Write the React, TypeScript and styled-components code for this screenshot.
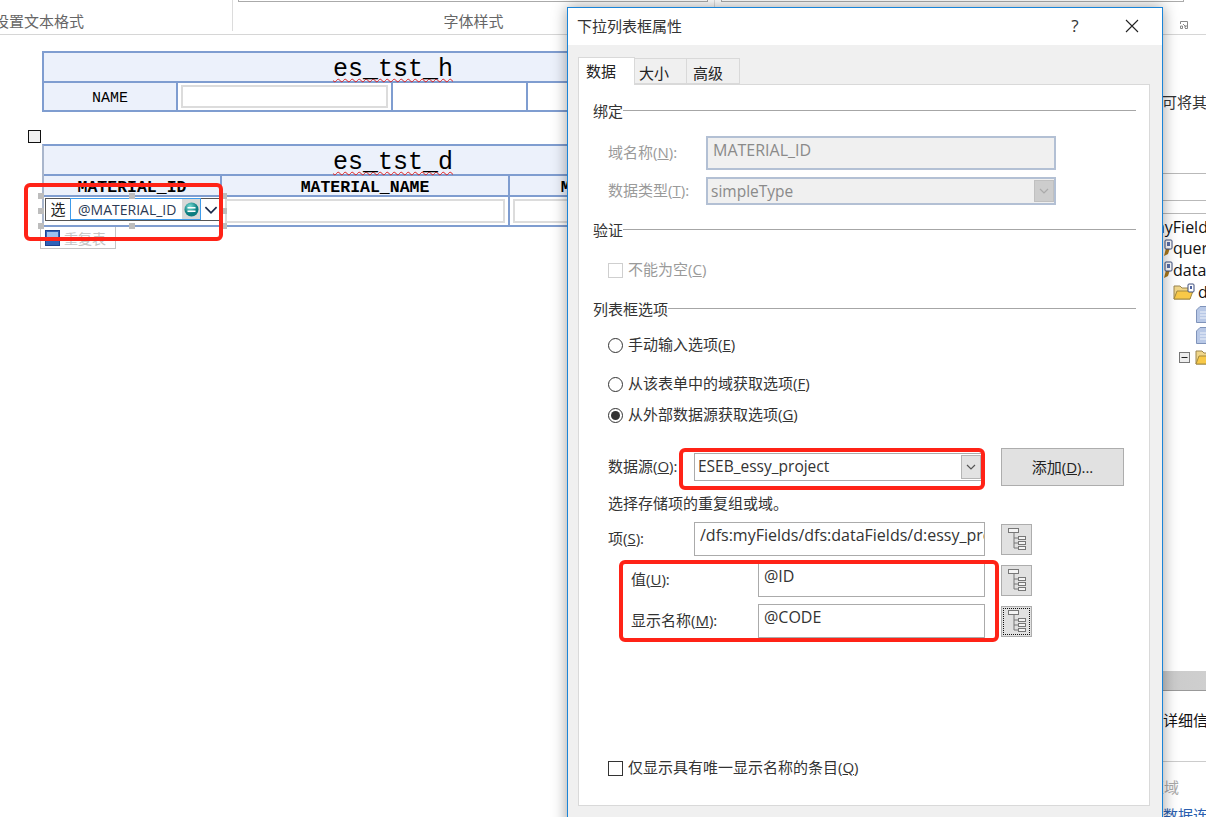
import React from "react";
import styled, { createGlobalStyle } from "styled-components";

const Global = createGlobalStyle`
  html, body { margin: 0; padding: 0; background: #fff; }
  body { font-family: "Open Sans", "Noto Sans CJK SC", sans-serif; overflow: hidden; }
  * { box-sizing: border-box; }
`;
const CJK = `"Open Sans", "Noto Sans CJK SC", sans-serif`;
const MONO = `"Liberation Mono", "Noto Sans CJK SC", monospace`;

const Screen = styled.div`position: relative; width: 1206px; height: 817px; overflow: hidden; background: #fff; color: #222;`;

/* Ribbon */
const Ribbon = styled.div`display: flex; height: 35px; border-bottom: 1px solid #d6d6d6;`;
const RibbonGroup = styled.div<{ $w?: number; $sep?: boolean; $start?: boolean }>`
  position: relative; ${p => p.$w ? `width: ${p.$w}px;` : "flex: 1;"} height: 31px; display: flex; align-items: flex-end;
  justify-content: ${p => p.$start ? "flex-start" : "center"}; text-indent: ${p => p.$start ? "-6px" : "0"};
  font: 15px/20px ${CJK}; color: #666; white-space: nowrap;
  ${p => p.$sep ? "border-right: 1px solid #dcdcdc;" : ""}
`;
const RibbonBox = styled.div<{ $l: number; $w: number }>`
  position: absolute; top: -2px; left: ${p => p.$l}px; width: ${p => p.$w}px; height: 4px; border: 1px solid #aaa; background: #fff;
`;
const Launcher = styled.svg`position: absolute; right: 18px; top: 21px;`;

const Workspace = styled.div`display: flex; height: 782px;`;
const Doc = styled.div`flex: 1; min-width: 0; padding: 16px 0 0 42px;`;
const FormTable = styled.div<{ $cols: string; $mt?: number; $muted?: boolean }>`
  position: relative; width: 702px; display: grid; grid-template-columns: ${p => p.$cols};
  margin-top: ${p => p.$mt ?? 0}px; background: #fff;
  border: 2px solid #7f9dd0; ${p => p.$muted ? "border-left-color:#a9b6cc;" : ""}
`;
const TitleCell = styled.div`
  grid-column: 1 / -1; height: 30px; background: #ecf1fb; border-bottom: 2px solid #7f9dd0;
  font: 25px/33px ${MONO}; color: #000; text-align: center;
`;
const Wavy = styled.span`text-decoration: underline wavy #e02020 1px; text-underline-offset: 2px;`;
const LabelCell = styled.div<{ $h: number; $size: number; $bold?: boolean; $lift?: number }>`
  height: ${p => p.$h}px; background: #ecf1fb; border-right: 2px solid #7f9dd0;
  font: ${p => p.$bold ? 700 : 400} ${p => p.$size}px/${p => p.$h + (p.$lift ?? 0)}px ${MONO}; color: #000; text-align: center; white-space: nowrap; overflow: hidden;
`;
const HeadCell = styled(LabelCell)`border-bottom: 2px solid #7f9dd0;`;
const InputCell = styled.div<{ $h: number; $flush?: boolean }>`
  height: ${p => p.$h}px; padding: ${p => p.$flush ? "0" : "2px 3px"}; border-right: 2px solid #7f9dd0; background: #fff;
`;
const GhostInput = styled.div`width: 100%; height: 100%; border: 2px solid #dcdcdc; background: #fff;`;
const RowHandle = styled.div`position: absolute; left: -16px; top: -16px; width: 13px; height: 13px; background: #f0f0f0; border: 1px solid #111;`;

const DropControl = styled.div`
  position: relative; height: 23px; margin: 1px 0 0 1px; width: 176px; display: flex; border: 1px solid #555; background: #fff;
  font: 15px/21px ${CJK}; color: #222;
`;
const DropPrefix = styled.span`width: 24px; text-align: center; flex: none;`;
const DropBind = styled.div`
  flex: none; width: 131px; height: 22px; margin-top: -1px; border: 1px solid #3e9bea; display: flex; align-items: center; color: #2b3a55; font-size: 14px; padding-left: 7px;
`;
const BindText = styled.span`flex: 1; white-space: nowrap; line-height: 20px; padding-top: 2px;`;
const BindIcon = styled.span`flex: none; width: 18px; height: 20px; background: #d8d8d8; display: flex; align-items: center; justify-content: center;`;
const DropArrow = styled.span`flex: 1; display: flex; align-items: center; justify-content: center;`;
const Handle = styled.span<{ $x: number; $y: number }>`
  position: absolute; width: 6px; height: 6px; background: #bdbdbd; left: ${p => p.$x}px; top: ${p => p.$y}px; z-index: 2;
`;
const RepeatTag = styled.div`
  width: 76px; height: 22px; margin-left: -2px; display: flex; align-items: center; gap: 4px; padding-left: 4px;
  border: 1px solid #c4c4c4; border-top: none; font: 14px ${CJK}; color: #c4c4c4; background: #fff;
`;

/* Side pane */
const Side = styled.div`flex: none; width: 260px; height: 100%; overflow: hidden; display: flex; flex-direction: column; font: 15px/20px ${CJK}; color: #333; white-space: nowrap;`;
const SideText = styled.div<{ $mt: number; $pl: number; $color?: string }>`
  flex: none; margin-top: ${p => p.$mt}px; padding-left: ${p => p.$pl}px; height: 20px; color: ${p => p.$color ?? "#333"};
`;
const SideRule = styled.div<{ $mt: number; $c?: string }>`flex: none; margin-top: ${p => p.$mt}px; height: 1px; background: ${p => p.$c ?? "#b9b9b9"};`;
const SideBar = styled.div<{ $mt: number }>`
  flex: none; margin-top: ${p => p.$mt}px; height: 20px; background: linear-gradient(90deg,#b5b5b5 0,#cfcfcf 100%); border-bottom: 1px solid #999;
`;
const TreeRow = styled.div<{ $mt: number; $pl: number }>`
  flex: none; margin-top: ${p => p.$mt}px; padding-left: ${p => p.$pl}px; height: 20px; display: flex; align-items: center; color: #111; font-size: 16px;
  & > * { flex: none; }
`;
const TreeLabel = styled.span<{ $ml: number }>`margin-left: ${p => p.$ml}px;`;

/* Dialog */
const Dialog = styled.div`
  position: absolute; left: 567px; top: 7px; width: 596px; height: 840px; background: #f0f0f0; border: 1px solid #1a84d8;
  box-shadow: 0 0 14px rgba(0,0,0,.38);
`;
const TitleBar = styled.div`height: 37px; background: #fff; display: flex; align-items: center; padding: 0 0 2px 9px; font: 15px/20px ${CJK}; color: #333;`;
const TitleText = styled.span`flex: 1;`;
const TitleHelp = styled.span`width: 16px; text-align: center; margin-right: 42px; font-size: 17px; color:#333;`;
const TitleClose = styled.span`width: 16px; margin-right: 21px; display: flex;`;
const Body = styled.div`padding: 12px 0 0 10px;`;
const Tabs = styled.div`display: flex; align-items: flex-end; height: 27px;`;
const Tab = styled.div<{ $active?: boolean; $w: number; $pl: number }>`
  width: ${p => p.$w}px; height: ${p => p.$active ? 28 : 26}px; margin-bottom: ${p => p.$active ? -1 : 0}px; position: relative; z-index: ${p => p.$active ? 2 : 0};
  background: ${p => p.$active ? "#fff" : "#f0f0f0"}; border: 1px solid #d9d9d9; ${p => p.$active ? "border-bottom: none;" : "border-left: none;"}
  font: 15px/${p => p.$active ? 26 : 28}px ${CJK}; padding-left: ${p => p.$pl}px; color: #222;
`;
const Panel = styled.div`
  width: 572px; height: 722px; background: #fff; border: 1px solid #d9d9d9; padding: 17px 13px 0 14px;
  font: 15px/20px ${CJK}; color: #333; display: flex; flex-direction: column;
`;
const GroupHead = styled.div<{ $mt?: number }>`
  margin-top: ${p => p.$mt ?? 0}px; height: 20px; display: flex; color: #333; flex: none; line-height: 18px;
  &::after { content: ""; flex: 1; height: 1px; margin-top: 8px; background: #a6a6a6; }
`;
const Line = styled.div<{ $mt: number; $pl?: number; $muted?: boolean; $top?: boolean }>`
  margin-top: ${p => p.$mt}px; padding-left: ${p => p.$pl ?? 15}px; min-height: 20px; display: flex; align-items: ${p => p.$top ? "flex-start" : "center"};
  color: ${p => p.$muted ? "#9a9a9a" : "#333"}; white-space: nowrap; flex: none;
`;
const Caption = styled.span`line-height: 18px; margin-bottom: 2px;`;
const FieldLabel = styled.span<{ $w: number; $mt?: number }>`
  flex: none; width: ${p => p.$w}px; margin-top: ${p => p.$mt ?? 0}px; line-height: 18px; margin-bottom: 2px;
`;
const Key = styled.span`text-decoration: underline;`;
const Box = styled.div<{ $w: number; $h: number; $muted?: boolean }>`
  flex: none; width: ${p => p.$w}px; height: ${p => p.$h}px; padding: 0 0 0 5px; overflow: hidden;
  font-size: 16px; line-height: 24px; white-space: nowrap;
  border: ${p => p.$muted ? "2px solid #b3c0d4" : "1px solid #ababab"};
  background: ${p => p.$muted ? "#f0f0f0" : "#fff"}; color: ${p => p.$muted ? "#8a8a8a" : "#333"};
`;
const Combo = styled(Box)`position: relative; padding-left: 3px; font-size: 15.5px;`;
const ComboBtn = styled.span<{ $muted?: boolean }>`
  position: absolute; right: 0; top: 1px; bottom: 1px; width: 20px; display: flex; align-items: center; justify-content: center;
  background: ${p => p.$muted ? "#cdcdcd" : "#e2e2e2"}; border: 1px solid ${p => p.$muted ? "#c0c0c0" : "#b5b5b5"};
`;
const Btn = styled.div`
  flex: none; margin-left: 19px; width: 123px; height: 38px; background: #e1e1e1; border: 1px solid #adadad; text-align: center; line-height: 36px; color: #222;
`;
const TreeBtn = styled.div<{ $focus?: boolean }>`
  flex: none; margin-left: 16px; width: 31px; height: 31px; background: #e1e1e1; border: 1px solid #adadad; display: flex; align-items: center; justify-content: center;
  ${p => p.$focus ? "outline: 1px dotted #111; outline-offset: -3px;" : ""}
`;
const Check = styled.span<{ $muted?: boolean }>`
  flex: none; width: 15px; height: 15px; margin-right: 5px; background: #fff; border: 1px solid ${p => p.$muted ? "#cfcfcf" : "#333"};
`;
const Radio = styled.span<{ $on?: boolean }>`
  flex: none; width: 15px; height: 15px; margin-right: 5px; border-radius: 50%; border: 1px solid #333; background: #fff; display: flex; align-items: center; justify-content: center;
  &::after { content: ""; width: 9px; height: 9px; border-radius: 50%; background: ${p => p.$on ? "#333" : "transparent"}; }
`;
const Annotation = styled.div<{ $l: number; $t: number; $w: number; $h: number }>`
  position: absolute; left: ${p => p.$l}px; top: ${p => p.$t}px; width: ${p => p.$w}px; height: ${p => p.$h}px;
  border: 4px solid #ff2317; border-radius: 6px; z-index: 10; pointer-events: none;
`;

const Chevron = ({ c = "#555", s = 10 }: { c?: string; s?: number }) => (
  <svg width={s} height={s} viewBox="0 0 10 10"><path d="M1 3l4 4 4-4" fill="none" stroke={c} strokeWidth="1.2" /></svg>
);
const TreeIcon = () => (
  <svg width="18" height="22" viewBox="0 0 18 22" fill="#f4f4f4" stroke="#777" strokeWidth="1">
    <rect x="0.5" y="0.5" width="10" height="4" />
    <path d="M6 5v15M6 10h4M6 15h4M6 20h4" fill="none" />
    <rect x="10.5" y="8.5" width="7" height="3" />
    <rect x="10.5" y="13.5" width="7" height="3" />
    <rect x="10.5" y="18.5" width="7" height="3" />
  </svg>
);
const BindBadge = () => (
  <svg width="15" height="15" viewBox="0 0 15 15">
    <defs><radialGradient id="tg" cx=".4" cy=".3"><stop offset="0" stopColor="#7fe0d8" /><stop offset="1" stopColor="#0d7d80" /></radialGradient></defs>
    <circle cx="7.5" cy="7.5" r="7" fill="url(#tg)" />
    <path d="M3.5 5.8h8M3.5 9.2h8" stroke="#fff" strokeWidth="1.6" />
  </svg>
);
const RepeatIcon = () => (
  <svg width="15" height="16" viewBox="0 0 15 16">
    <rect x=".5" y=".5" width="14" height="15" fill="#2f62b8" stroke="#1d4390" />
    <rect x="2" y="2" width="11" height="5" fill="#9cc0ee" />
    <rect x="4" y="8" width="7" height="2" fill="#fff" />
  </svg>
);
const Plug = () => (
  <svg width="10" height="18" viewBox="0 0 10 18">
    <path d="M3 9l-2 8 4-2 2-6z" fill="#a9791d" />
    <rect x="2" y="1" width="7" height="9" rx="1" fill="#fff" stroke="#3c4d7a" />
    <rect x="4" y="3" width="3" height="4" fill="#5a6fa8" />
  </svg>
);
const Folder = () => (
  <svg width="22" height="18" viewBox="0 0 22 18">
    <path d="M1 3h6l2 2h8v11H1z" fill="#f0d68a" stroke="#9a8550" />
    <path d="M1 16l3-8h16l-3 8z" fill="#f8c948" stroke="#a48a3e" />
    <rect x="15" y="1" width="6" height="8" rx="1" fill="#fff" stroke="#3c4d7a" />
    <rect x="17" y="3" width="2" height="3" fill="#4c62a0" />
  </svg>
);
const DocIcon = () => (
  <svg width="18" height="17" viewBox="0 0 18 17">
    <path d="M4 .5h14v16H.5V4z" fill="#b8c8e6" stroke="#7f93ba" />
    <path d="M4 6h14M4 9h14M4 12h14" stroke="#eef3fb" />
  </svg>
);
const MinusBox = () => (
  <svg width="11" height="11" viewBox="0 0 11 11" style={{ marginRight: 5 }}>
    <rect x=".5" y=".5" width="10" height="10" fill="#eee" stroke="#777" />
    <path d="M2.5 5.5h6" stroke="#222" />
  </svg>
);

export default function App() {
  return (
    <Screen>
      <Global />
      <Ribbon>
        <RibbonGroup $w={233} $sep $start>
          设置文本格式
          <RibbonBox $l={238} $w={470} />
        </RibbonGroup>
        <RibbonGroup $w={482} $sep>字体样式</RibbonGroup>
        <RibbonGroup>
          <RibbonBox $l={6} $w={463} />
          <Launcher width="8" height="8" viewBox="0 0 8 8"><path d="M.5 3V.5H7.5V7.5H5M3 3l3 3M4 6h2V4M.5 5h2v2.500h-2z" fill="none" stroke="#888" /></Launcher>
        </RibbonGroup>
      </Ribbon>
      <Workspace>
        <Doc>
          <FormTable $cols="134px 215px 135px 1fr">
            <TitleCell><Wavy>es_tst_h</Wavy></TitleCell>
            <LabelCell $h={27} $size={15} $lift={4}>NAME</LabelCell>
            <InputCell $h={27}><GhostInput /></InputCell>
            <InputCell $h={27} />
            <InputCell $h={27} />
          </FormTable>
          <FormTable $cols="178px 288px 1fr" $mt={32} $muted>
            <RowHandle />
            <TitleCell><Wavy>es_tst_d</Wavy></TitleCell>
            <HeadCell $h={21} $size={16.5} $bold $lift={2}>MATERIAL_ID</HeadCell>
            <HeadCell $h={21} $size={16.5} $bold $lift={2}>MATERIAL_NAME</HeadCell>
            <HeadCell $h={21} $size={16.5} $bold $lift={2}>MATERIAL_UNIT</HeadCell>
            <InputCell $h={28} $flush>
              <DropControl>
                <DropPrefix>选</DropPrefix>
                <DropBind>
                  <BindText>@MATERIAL_ID</BindText>
                  <BindIcon><BindBadge /></BindIcon>
                </DropBind>
                <DropArrow><Chevron c="#1a2a4a" s={14} /></DropArrow>
              </DropControl>
              <Handle $x={-6} $y={47} />
              <Handle $x={85} $y={47} />
              <Handle $x={177} $y={47} />
              <Handle $x={-6} $y={62} />
              <Handle $x={177} $y={62} />
              <Handle $x={-6} $y={77} />
              <Handle $x={85} $y={77} />
              <Handle $x={177} $y={77} />
            </InputCell>
            <InputCell $h={28}><GhostInput /></InputCell>
            <InputCell $h={28}><GhostInput /></InputCell>
          </FormTable>
          <RepeatTag><RepeatIcon />重复表</RepeatTag>
        </Doc>
        <Side>
          <SideText $mt={57} $pl={216}>可将其</SideText>
          <SideRule $mt={61} />
          <SideRule $mt={26} />
          <SideRule $mt={12} />
          <TreeRow $mt={3} $pl={204}>myFields</TreeRow>
          <TreeRow $mt={1} $pl={217}><Plug /><TreeLabel $ml={0}>query</TreeLabel></TreeRow>
          <TreeRow $mt={2} $pl={217}><Plug /><TreeLabel $ml={0}>dataFields</TreeLabel></TreeRow>
          <TreeRow $mt={2} $pl={227}><Folder /><TreeLabel $ml={3}>d</TreeLabel></TreeRow>
          <TreeRow $mt={2} $pl={250}><DocIcon /></TreeRow>
          <TreeRow $mt={1} $pl={250}><DocIcon /></TreeRow>
          <TreeRow $mt={2} $pl={233}><MinusBox /><Folder /></TreeRow>
          <SideBar $mt={304} />
          <SideText $mt={19} $pl={202} $color="#111">的详细信息</SideText>
          <SideRule $mt={31} $c="#ccc" />
          <SideText $mt={15} $pl={203} $color="#aaa">区域</SideText>
          <SideText $mt={8} $pl={217} $color="#2a5fb0">数据连接</SideText>
        </Side>
      </Workspace>

      <Annotation $l={24} $t={183} $w={199} $h={58} />

      <Dialog>
        <TitleBar>
          <TitleText>下拉列表框属性</TitleText>
          <TitleHelp>?</TitleHelp>
          <TitleClose>
            <svg width="14" height="14" viewBox="0 0 14 14"><path d="M1 1l12 12M13 1L1 13" stroke="#222" strokeWidth="1.1" /></svg>
          </TitleClose>
        </TitleBar>
        <Body>
          <Tabs>
            <Tab $active $w={57} $pl={7}>数据</Tab>
            <Tab $w={52} $pl={4}>大小</Tab>
            <Tab $w={53} $pl={6}>高级</Tab>
          </Tabs>
          <Panel>
            <GroupHead>绑定</GroupHead>
            <Line $mt={14} $muted $top>
              <FieldLabel $w={98} $mt={7}>域名称(<Key>N</Key>):</FieldLabel>
              <Box $w={350} $h={34} $muted>MATERIAL_ID</Box>
            </Line>
            <Line $mt={7} $muted>
              <FieldLabel $w={98}>数据类型(<Key>T</Key>):</FieldLabel>
              <Combo $w={350} $h={28} $muted>simpleType<ComboBtn $muted><Chevron c="#aaa" /></ComboBtn></Combo>
            </Line>
            <GroupHead $mt={16}>验证</GroupHead>
            <Line $mt={19} $muted><Check $muted /><Caption>不能为空(<Key>C</Key>)</Caption></Line>
            <GroupHead $mt={20}>列表框选项</GroupHead>
            <Line $mt={15}><Radio /><Caption>手动输入选项(<Key>E</Key>)</Caption></Line>
            <Line $mt={19}><Radio /><Caption>从该表单中的域获取选项(<Key>F</Key>)</Caption></Line>
            <Line $mt={11}><Radio $on /><Caption>从外部数据源获取选项(<Key>G</Key>)</Caption></Line>
            <Line $mt={23}>
              <FieldLabel $w={86}>数据源(<Key>O</Key>):</FieldLabel>
              <Combo $w={288} $h={28}>ESEB_essy_project<ComboBtn><Chevron /></ComboBtn></Combo>
              <Btn>添加(<Key>D</Key>)...</Btn>
            </Line>
            <Line $mt={8}><Caption>选择存储项的重复组或域。</Caption></Line>
            <Line $mt={8}>
              <FieldLabel $w={86}>项(<Key>S</Key>):</FieldLabel>
              <Box $w={291} $h={34}>/dfs:myFields/dfs:dataFields/d:essy_project</Box>
              <TreeBtn><TreeIcon /></TreeBtn>
            </Line>
            <Line $mt={7} $pl={38}>
              <FieldLabel $w={127}>值(<Key>U</Key>):</FieldLabel>
              <Box $w={227} $h={34}>@ID</Box>
              <TreeBtn><TreeIcon /></TreeBtn>
            </Line>
            <Line $mt={7} $pl={38}>
              <FieldLabel $w={127}>显示名称(<Key>M</Key>):</FieldLabel>
              <Box $w={227} $h={34}>@CODE</Box>
              <TreeBtn $focus><TreeIcon /></TreeBtn>
            </Line>
            <Line $mt={120}><Check /><Caption>仅显示具有唯一显示名称的条目(<Key>Q</Key>)</Caption></Line>
          </Panel>
        </Body>
      </Dialog>

      <Annotation $l={679} $t={448} $w={306} $h={42} />
      <Annotation $l={619} $t={560} $w={380} $h={82} />
    </Screen>
  );
}
